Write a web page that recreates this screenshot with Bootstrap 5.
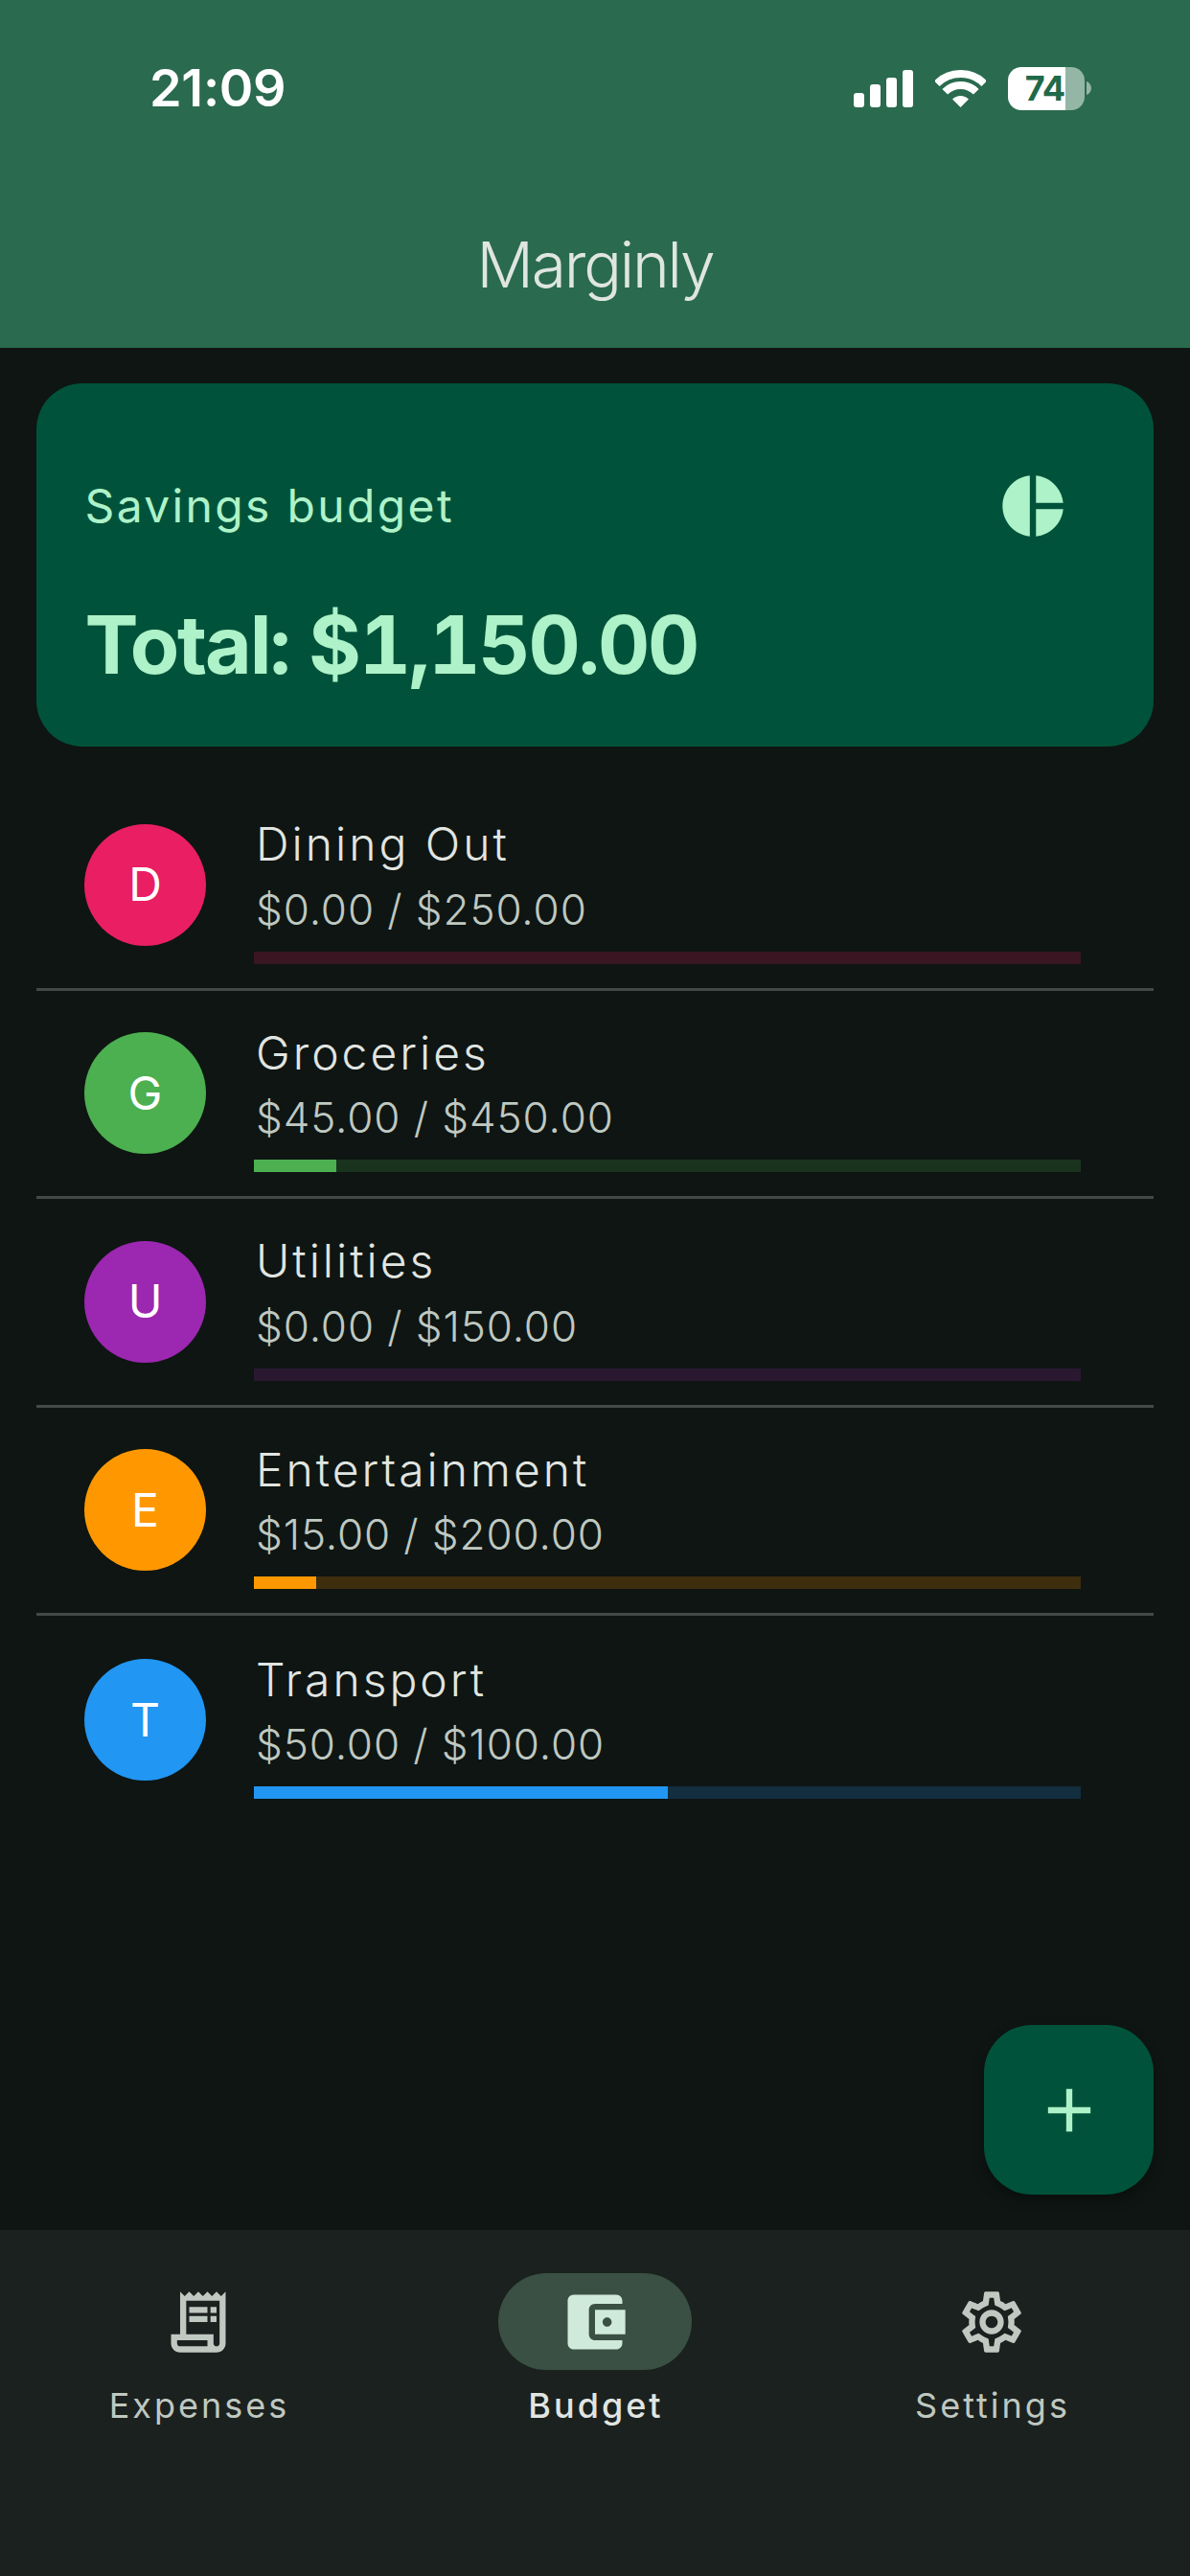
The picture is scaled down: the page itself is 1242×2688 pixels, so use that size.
<!DOCTYPE html>
<html lang="en">
<head>
<meta charset="utf-8">
<title>Marginly</title>
<link href="https://cdn.jsdelivr.net/npm/bootstrap@5.3.0/dist/css/bootstrap.min.css" rel="stylesheet">
<style>
html,body{margin:0;background:#0e1512;font-family:Inter,"Liberation Sans",sans-serif;}
.app-shell{width:1242px;height:2688px;overflow:hidden;}
.top-area{background:#2a6a4f;height:363px;flex:none;}
.status-row{height:60px;margin-top:62px;padding-left:156px;padding-right:103px;}
.clock{font-size:54px;line-height:60px;font-weight:600;color:#fff;letter-spacing:-.3px;}
.status-icons{gap:23px;}
.battery-wrap{gap:2px;}
.battery-body{width:80px;height:45px;border-radius:14px;background:linear-gradient(90deg,#fff 75%,#93b6a6 75%);color:#1f6a4a;font-size:36px;line-height:45px;font-weight:700;padding-right:21px;letter-spacing:-1px;}
.app-title{font-size:66px;line-height:84px;color:#dfe5e0;margin:112px 0 0;font-weight:300;letter-spacing:-2.2px;}
.main-area{padding:37px 38px 0;}
.summary-card{background:#00533a;border:0;border-radius:48px;height:379px;color:#aef2c9;}
.summary-body{padding:89.5px 88.5px 0 50.5px;}
.summary-head{height:76px;}
.summary-label{font-size:48px;line-height:76px;letter-spacing:2.35px;}
.summary-total{font-size:84px;line-height:108px;font-weight:700;margin-top:53px;letter-spacing:-2.2px;font-variant-numeric:tabular-nums;}
.budget-list{margin-top:37px;background:transparent;}
.budget-list .budget-row{background:transparent;height:217.5px;padding:0 76px 0 50px;border:0;border-bottom:3px solid #434a45;gap:50px;border-radius:0;}
.budget-list .budget-row:last-child{border-bottom:0;}
.avatar-dot{width:127px;height:127px;color:#fff;font-size:48px;flex:none;}
.row-text{padding-top:4.5px;}
.row-title{font-size:48px;line-height:72px;letter-spacing:3px;color:#e1e5e1;padding-left:2px;font-weight:350;}
.row-sub{font-size:44px;line-height:60px;letter-spacing:.9px;color:#bfc8c1;padding-left:2px;margin-top:1.5px;font-weight:350;}
.row-bar{height:13px;margin-top:14px;border-radius:0;}
.fab-add{right:38px;bottom:37px;width:177px;height:177px;border-radius:50px;background:#00533a;border:0;box-shadow:0 6px 14px rgba(0,0,0,.3);padding:0;}
.bottom-nav{background:#1b211e;height:361px;padding-top:45px;flex:none;}
.nav-cell{width:414px;}
.nav-pill-box{width:202px;height:101px;border-radius:51px;}
.nav-pill-box.is-active{background:#3a5044;}
.nav-text{font-size:36px;line-height:48px;letter-spacing:3px;color:#bfc8c1;margin-top:13px;padding-left:2px;}
.nav-text.is-active{color:#e1e5e1;font-weight:500;}
.pink-fill{background:#e91e63}.pink-track{background:rgba(233,30,99,.2)}
.green-fill{background:#4caf50}.green-track{background:rgba(76,175,80,.2)}
.purple-fill{background:#9c27b0}.purple-track{background:rgba(156,39,176,.2)}
.orange-fill{background:#ff9800}.orange-track{background:rgba(255,152,0,.2)}
.blue-fill{background:#2196f3}.blue-track{background:rgba(33,150,243,.2)}
</style>
</head>
<body>
<div class="app-shell d-flex flex-column">
  <header class="top-area d-flex flex-column">
    <div class="status-row d-flex justify-content-between align-items-center">
      <div class="clock">21:09</div>
      <div class="status-icons d-flex align-items-center">
        <svg width="62" height="39" viewBox="0 0 62 39" fill="#fff" aria-hidden="true"><rect x="0" y="24" width="11" height="15" rx="3"/><rect x="17" y="15" width="11" height="24" rx="3"/><rect x="34" y="8" width="11" height="31" rx="3"/><rect x="51" y="0" width="11" height="39" rx="3"/></svg>
        <svg width="53" height="39" viewBox="0 0 53 39" aria-hidden="true"><path d="M1.75 14.25A35 35 0 0 1 51.25 14.25M10.24 22.74A23 23 0 0 1 42.76 22.74" fill="none" stroke="#fff" stroke-width="8"/><path d="M26.5 39 18 30.5A12 12 0 0 1 35 30.5Z" fill="#fff"/></svg>
        <div class="battery-wrap d-flex align-items-center">
          <div class="battery-body d-flex justify-content-end">74</div>
          <svg width="5" height="14" viewBox="0 0 5 14" aria-hidden="true"><path d="M0 0C3 1 5 4 5 7S3 13 0 14Z" fill="#93b6a6"/></svg>
        </div>
      </div>
    </div>
    <h1 class="app-title text-center">Marginly</h1>
  </header>

  <main class="main-area flex-grow-1 position-relative">
    <div class="card summary-card">
      <div class="card-body summary-body">
        <div class="summary-head d-flex justify-content-between align-items-center">
          <div class="summary-label">Savings budget</div>
          <svg width="76" height="76" viewBox="0 0 24 24" fill="#aef2c9" aria-hidden="true"><path d="M11 2v20c-5.07-.5-9-4.79-9-10s3.93-9.5 9-10zm2.03 0v8.99H22c-.47-4.74-4.24-8.52-8.97-8.99zm0 11.01V22c4.74-.47 8.5-4.25 8.97-8.99h-8.97z"/></svg>
        </div>
        <div class="summary-total">Total: $1,150.00</div>
      </div>
    </div>

    <div class="list-group list-group-flush budget-list">
      <div class="list-group-item budget-row d-flex align-items-center">
        <div class="avatar-dot rounded-circle pink-fill d-flex align-items-center justify-content-center">D</div>
        <div class="row-text flex-grow-1">
          <div class="row-title">Dining Out</div>
          <div class="row-sub">$0.00 / $250.00</div>
          <div class="row-bar pink-track"></div>
        </div>
      </div>
      <div class="list-group-item budget-row d-flex align-items-center">
        <div class="avatar-dot rounded-circle green-fill d-flex align-items-center justify-content-center">G</div>
        <div class="row-text flex-grow-1">
          <div class="row-title">Groceries</div>
          <div class="row-sub">$45.00 / $450.00</div>
          <div class="row-bar green-track"><div class="h-100 green-fill" style="width:10%"></div></div>
        </div>
      </div>
      <div class="list-group-item budget-row d-flex align-items-center">
        <div class="avatar-dot rounded-circle purple-fill d-flex align-items-center justify-content-center">U</div>
        <div class="row-text flex-grow-1">
          <div class="row-title">Utilities</div>
          <div class="row-sub">$0.00 / $150.00</div>
          <div class="row-bar purple-track"></div>
        </div>
      </div>
      <div class="list-group-item budget-row d-flex align-items-center">
        <div class="avatar-dot rounded-circle orange-fill d-flex align-items-center justify-content-center">E</div>
        <div class="row-text flex-grow-1">
          <div class="row-title">Entertainment</div>
          <div class="row-sub">$15.00 / $200.00</div>
          <div class="row-bar orange-track"><div class="h-100 orange-fill" style="width:7.5%"></div></div>
        </div>
      </div>
      <div class="list-group-item budget-row d-flex align-items-center">
        <div class="avatar-dot rounded-circle blue-fill d-flex align-items-center justify-content-center">T</div>
        <div class="row-text flex-grow-1">
          <div class="row-title">Transport</div>
          <div class="row-sub">$50.00 / $100.00</div>
          <div class="row-bar blue-track"><div class="h-100 blue-fill" style="width:50%"></div></div>
        </div>
      </div>
    </div>

    <button type="button" class="btn fab-add position-absolute d-flex align-items-center justify-content-center" aria-label="Add">
      <svg width="76" height="76" viewBox="0 0 24 24" fill="#aef2c9" aria-hidden="true"><path d="M19 13h-6v6h-2v-6H5v-2h6V5h2v6h6v2z"/></svg>
    </button>
  </main>

  <nav class="bottom-nav d-flex">
    <div class="nav-cell d-flex flex-column align-items-center">
      <div class="nav-pill-box d-flex align-items-center justify-content-center">
        <svg width="76" height="76" viewBox="0 0 24 24" fill="#bfc8c1" aria-hidden="true"><path d="M19.5 3.5 18 2l-1.5 1.5L15 2l-1.5 1.5L12 2l-1.5 1.5L9 2 7.5 3.5 6 2v14H3v3c0 1.66 1.34 3 3 3h12c1.66 0 3-1.34 3-3V2l-1.5 1.5zM15 20H6c-.55 0-1-.45-1-1v-1h10v2zm4-1c0 .55-.45 1-1 1s-1-.45-1-1v-3H8V5h11v14z"/><path d="M9 7h6v2H9zm7 0h2v2h-2zm-7 3h6v2H9zm7 0h2v2h-2z"/></svg>
      </div>
      <div class="nav-text">Expenses</div>
    </div>
    <div class="nav-cell d-flex flex-column align-items-center">
      <div class="nav-pill-box is-active d-flex align-items-center justify-content-center">
        <svg width="76" height="76" viewBox="0 0 24 24" fill="#cfe9da" aria-hidden="true"><path d="M21 18v1c0 1.1-.9 2-2 2H5c-1.11 0-2-.9-2-2V5c0-1.1.89-2 2-2h14c1.1 0 2 .9 2 2v1h-9c-1.11 0-2 .9-2 2v8c0 1.1.89 2 2 2h9zm-9-2h10V8H12v8zm4-2.5c-.83 0-1.5-.67-1.5-1.5s.67-1.5 1.5-1.5 1.5.67 1.5 1.5-.67 1.5-1.5 1.5z"/></svg>
      </div>
      <div class="nav-text is-active">Budget</div>
    </div>
    <div class="nav-cell d-flex flex-column align-items-center">
      <div class="nav-pill-box d-flex align-items-center justify-content-center">
        <svg width="76" height="76" viewBox="0 0 24 24" fill="#bfc8c1" aria-hidden="true"><path d="M19.43 12.98c.04-.32.07-.64.07-.98 0-.34-.03-.66-.07-.98l2.11-1.65c.19-.15.24-.42.12-.64l-2-3.46c-.09-.16-.26-.25-.44-.25-.06 0-.12.01-.17.03l-2.49 1c-.52-.4-1.08-.73-1.69-.98l-.38-2.65C14.46 2.18 14.25 2 14 2h-4c-.25 0-.46.18-.49.42l-.38 2.65c-.61.25-1.17.59-1.69.98l-2.49-1c-.06-.02-.12-.03-.18-.03-.17 0-.34.09-.43.25l-2 3.46c-.13.22-.07.49.12.64l2.11 1.65c-.04.32-.07.65-.07.98 0 .33.03.66.07.98l-2.11 1.65c-.19.15-.24.42-.12.64l2 3.46c.09.16.26.25.44.25.06 0 .12-.01.17-.03l2.49-1c.52.4 1.08.73 1.69.98l.38 2.65c.03.24.24.42.49.42h4c.25 0 .46-.18.49-.42l.38-2.65c.61-.25 1.17-.59 1.69-.98l2.49 1c.06.02.12.03.18.03.17 0 .34-.09.43-.25l2-3.46c.12-.22.07-.49-.12-.64l-2.11-1.65zm-1.98-1.71c.04.31.05.52.05.73 0 .21-.02.43-.05.73l-.14 1.13.89.7 1.08.84-.7 1.21-1.27-.51-1.04-.42-.9.68c-.43.32-.84.56-1.25.73l-1.06.43-.16 1.13-.2 1.35h-1.4l-.19-1.35-.16-1.13-1.06-.43c-.43-.18-.83-.41-1.23-.71l-.91-.7-1.06.43-1.27.51-.7-1.21 1.08-.84.89-.7-.14-1.13c-.03-.31-.05-.54-.05-.74s.02-.43.05-.73l.14-1.13-.89-.7-1.08-.84.7-1.21 1.27.51 1.04.42.9-.68c.43-.32.84-.56 1.25-.73l1.06-.43.16-1.13.2-1.35h1.39l.19 1.35.16 1.13 1.06.43c.43.18.83.41 1.23.71l.91.7 1.06-.43 1.27-.51.7 1.21-1.07.85-.89.7.14 1.13zM12 8c-2.21 0-4 1.79-4 4s1.79 4 4 4 4-1.79 4-4-1.79-4-4-4zm0 6c-1.1 0-2-.9-2-2s.9-2 2-2 2 .9 2 2-.9 2-2 2z"/></svg>
      </div>
      <div class="nav-text">Settings</div>
    </div>
  </nav>
</div>
<script src="https://cdn.jsdelivr.net/npm/bootstrap@5.3.0/dist/js/bootstrap.bundle.min.js"></script>
</body>
</html>
